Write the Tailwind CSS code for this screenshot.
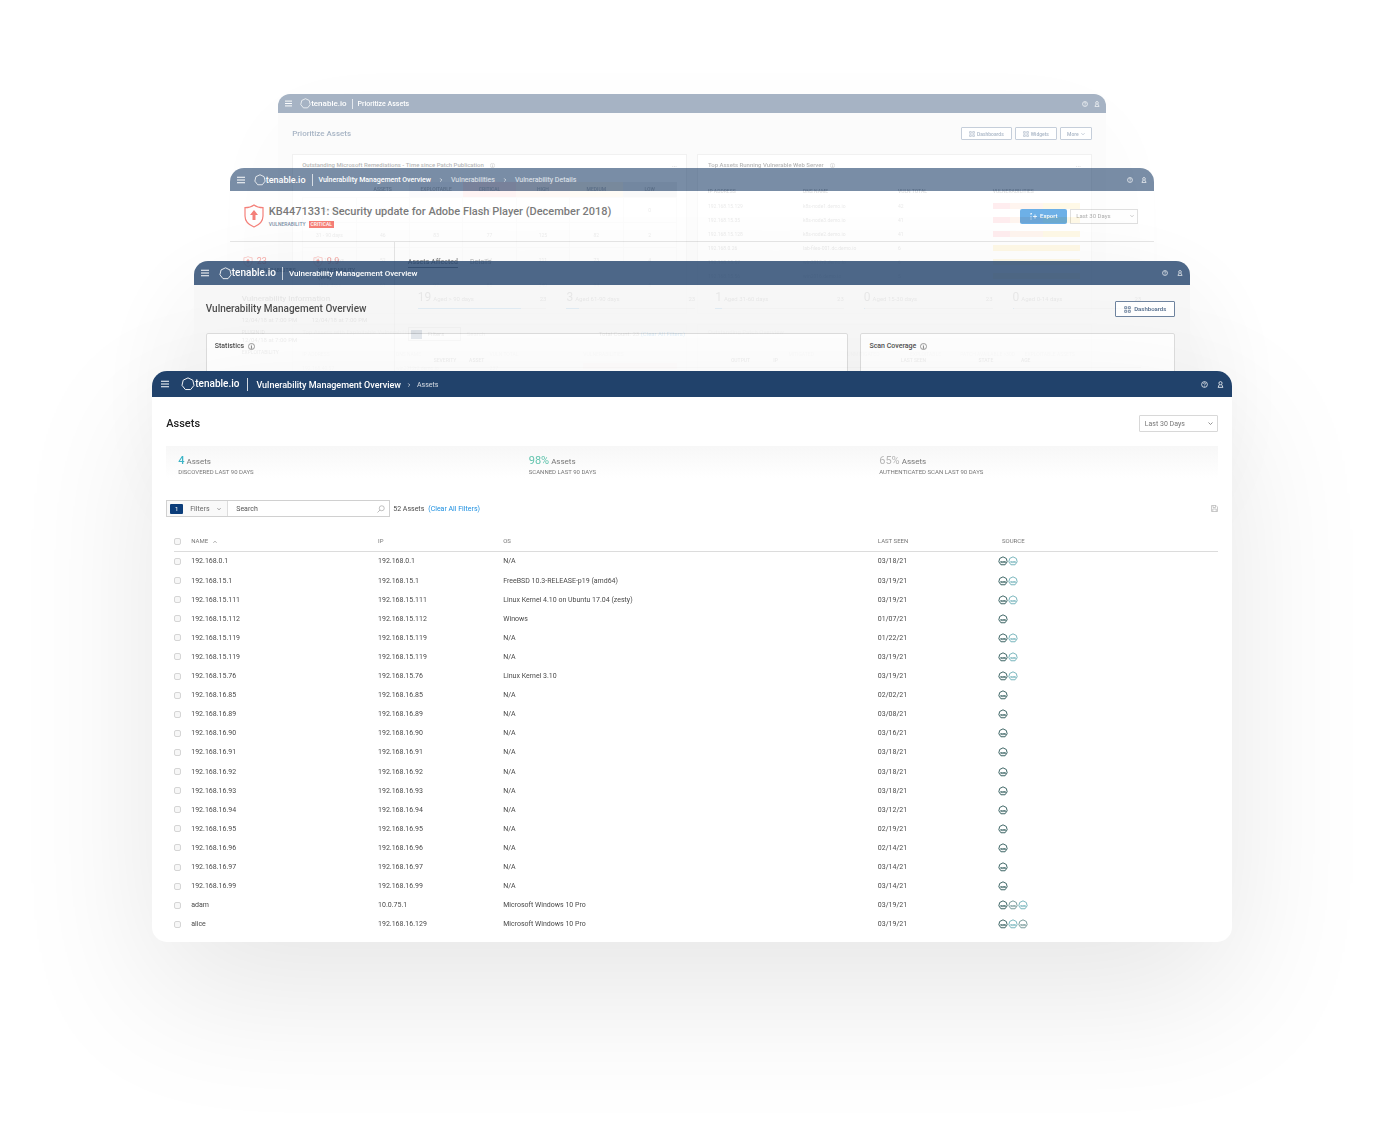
<!DOCTYPE html>
<html lang="en">
<head>
    <meta charset="UTF-8">
    <meta name="viewport" content="width=device-width, initial-scale=1.0">
    <title>Tenable.io - Assets</title>
    <script src="https://cdn.jsdelivr.net/npm/@tailwindcss/browser@4"></script>
</head>
<body class="min-h-screen bg-white font-['Roboto','Liberation_Sans',sans-serif] text-[7px] leading-[10px] text-[#4a4a4a]">

    <!-- Shared icons -->
    <svg class="hidden">
        <symbol id="menu" viewBox="0 0 16 16"><path d="M0 2.500h16M0 8h16M0 13.500h16" stroke="currentColor" stroke-width="2.200"/></symbol>
        <symbol id="ring" viewBox="0 0 24 24"><path d="M12 1.500 20.200 5.400 22.300 14.300 16.600 21.500H7.400L1.700 14.300 3.800 5.400Z" fill="none" stroke="currentColor" stroke-width="1.600" stroke-linejoin="round"/></symbol>
        <symbol id="help" viewBox="0 0 16 16"><circle cx="8" cy="8" r="6.600" fill="none" stroke="currentColor" stroke-width="1.700"/><path d="M5.800 6.400C5.800 3.400 10.200 3.400 10.200 6.200 10.200 8 8 7.800 8 9.800M8 11v1.800" fill="none" stroke="currentColor" stroke-width="1.600"/></symbol>
        <symbol id="user" viewBox="0 0 16 16"><circle cx="8" cy="5" r="3.600" fill="none" stroke="currentColor" stroke-width="1.800"/><path d="M5.200 8.500 2.500 14.500h11L10.800 8.500" fill="none" stroke="currentColor" stroke-width="1.800"/></symbol>
        <symbol id="info" viewBox="0 0 16 16"><circle cx="8" cy="8" r="7" fill="none" stroke="currentColor" stroke-width="1.200"/><path d="M8 7v5M8 4v1.600M6.500 7H8M6.300 12h3.400" stroke="currentColor" stroke-width="1.300"/></symbol>
        <symbol id="down" viewBox="0 0 10 10"><path d="m1 3 4 4 4-4" fill="none" stroke="currentColor" stroke-width="1.600"/></symbol>
        <symbol id="up" viewBox="0 0 10 10"><path d="m1 7 4-4 4 4" fill="none" stroke="currentColor" stroke-width="1.600"/></symbol>
        <symbol id="right" viewBox="0 0 10 10"><path d="m3 1 4 4-4 4" fill="none" stroke="currentColor" stroke-width="1.600"/></symbol>
        <symbol id="grid" viewBox="0 0 16 16"><path d="M1.500 1.500h4.600v4.600H1.500zM9.900 1.500h4.600v4.600H9.900zM1.500 9.900h4.600v4.600H1.500zM9.900 9.900h4.600v4.600H9.900z" fill="none" stroke="currentColor" stroke-width="1.600"/></symbol>
        <symbol id="shield" viewBox="0 0 20 24"><path d="M10 1C7.500 3 4.500 3.700 1 3.700V12C1 17.500 5 21 10 23 15 21 19 17.500 19 12V3.700C15.500 3.700 12.500 3 10 1Z" fill="none" stroke="currentColor" stroke-width="1.200"/><path d="M10 6 6 11H8.500V16H11.500V11H14Z" fill="currentColor"/></symbol>
    </svg>

    <main class="grid overflow-hidden pb-[194px]">

        <!-- Prioritize Assets -->
        <section class="mx-[20.1%] mt-[94px] self-start overflow-hidden rounded-t-[12px] bg-[#f5f5f5] opacity-40 shadow-[0_30px_100px_rgb(0_0_0/0.08)] [grid-area:1/1]">
            <header class="flex h-[19px] items-center bg-[#21426b] pr-[6px] pl-[7px] text-white">
                <button aria-label="Menu"><svg class="size-[7px]"><use href="#menu"/></svg></button>
                <a href="#" class="ml-[8px] flex items-center text-[8px] font-medium"><svg class="size-[11px]"><use href="#ring"/></svg>tenable.io</a>
                <span class="mx-[5px] h-[10px] w-px bg-white/70"></span>
                <span class="text-[7px] font-medium">Prioritize Assets</span>
                <button aria-label="Help" class="ml-auto"><svg class="size-[6px]"><use href="#help"/></svg></button>
                <button aria-label="Account" class="ml-[6px]"><svg class="size-[6px]"><use href="#user"/></svg></button>
            </header>
            <div class="px-[14px] pt-[14px]">
                <div class="flex h-[13px] items-center gap-[3px] text-[5px] text-[#21426b]">
                    <h2 class="mr-auto text-[8px] font-medium">Prioritize Assets</h2>
                    <button class="flex h-[13px] w-[51px] items-center justify-center gap-[2px] rounded-[1px] border border-[#6f86a3] bg-white font-medium"><svg class="size-[6px]"><use href="#grid"/></svg>Dashboards</button>
                    <button class="flex h-[13px] w-[42px] items-center justify-center gap-[2px] rounded-[1px] border border-[#6f86a3] bg-white font-medium"><svg class="size-[6px]"><use href="#grid"/></svg>Widgets</button>
                    <button class="flex h-[13px] w-[32px] items-center justify-center gap-[2px] rounded-[1px] border border-[#6f86a3] bg-white font-medium">More<svg class="size-[4px]"><use href="#down"/></svg></button>
                </div>
                <div class="mt-[14px] grid grid-cols-2 gap-[10px]">
                    <div class="h-[160px] border border-[#ddd] bg-white px-[9px] pt-[5px]">
                        <h3 class="flex items-center gap-[6px] text-[6px] font-medium">Outstanding Microsoft Remediations - Time since Patch Publication <svg class="size-[5px]"><use href="#info"/></svg><span class="ml-auto text-[#888]">...</span></h3>
                        <table class="mt-[12px] w-full table-fixed text-center text-[5px] text-[#888]">
                            <thead class="text-[#333]">
                                <tr class="h-[15px]"><th></th><th class="font-medium">ASSETS</th><th class="bg-[#e8e4ef] font-medium">EXPLOITABLE</th><th class="bg-[#f8b5b5] font-medium">CRITICAL</th><th class="bg-[#f8d2c0] font-medium">HIGH</th><th class="bg-[#fbe3bd] font-medium">MEDIUM</th><th class="bg-[#dcdcdc] font-medium">LOW</th></tr>
                            </thead>
                            <tbody id="patch-rows"></tbody>
                        </table>
                    </div>
                    <div class="h-[160px] border border-[#ddd] bg-white pt-[5px] pr-[3px] pl-[10px]">
                        <h3 class="flex items-center gap-[6px] pr-[7px] text-[6px] font-medium">Top Assets Running Vulnerable Web Server <svg class="size-[5px]"><use href="#info"/></svg><span class="ml-auto text-[#888]">...</span></h3>
                        <table class="mt-[12px] w-full table-fixed text-left text-[5px] text-[#777]">
                            <thead class="text-[#333]">
                                <tr class="h-[17px]"><th class="font-medium">IP ADDRESS</th><th class="font-medium">DNS NAME</th><th class="font-medium">VULN TOTAL</th><th class="font-medium">VULNERABILITIES</th></tr>
                            </thead>
                            <tbody id="server-rows"></tbody>
                        </table>
                    </div>
                    <div class="h-[90px] border border-[#ddd] bg-white px-[9px] pt-[2px]">
                        <h3 class="text-[6px] font-medium text-[#777]">Top Assets with Exploitable Vulnerabilities</h3>
                        <div class="mt-[12px] grid grid-cols-4 gap-y-[4px] text-[5px] text-[#777]">
                            <span>IP ADDRESS</span><span>DNS NAME</span><span>VULN TOTAL</span><span>VULNERABILITIES</span>
                            <span>192.168.40.57</span><span>win2012r2.demo.io</span><span>237</span><span class="h-[6px] bg-[#f8c5c0]"></span>
                        </div>
                    </div>
                    <div class="h-[90px] border border-[#ddd] bg-white px-[10px] pt-[2px]">
                        <h3 class="text-[6px] font-medium text-[#777]">Outstanding Patch Overview</h3>
                        <div class="mt-[12px] grid grid-cols-6 text-center text-[5px] whitespace-nowrap text-[#777]">
                            <span></span><span>MITIGATED</span><span>UNMITIGATED</span><span>EXPLOITABLE</span><span>PATCH AVAILABLE &gt;30D</span><span>EXPLOITABLE ASSETS</span>
                        </div>
                    </div>
                </div>
            </div>
        </section>

        <!-- Vulnerability Details -->
        <section class="mx-[16.6%] mt-[168px] self-start overflow-hidden rounded-t-[14px] bg-white opacity-60 [grid-area:1/1]">
            <header class="flex h-[23px] items-center bg-[#21426b] pr-[7px] pl-[7px] text-white">
                <button aria-label="Menu"><svg class="size-[8px]"><use href="#menu"/></svg></button>
                <a href="#" class="ml-[9px] flex items-center text-[9px] font-medium"><svg class="size-[12px]"><use href="#ring"/></svg>tenable.io</a>
                <span class="mx-[6px] h-[12px] w-px bg-white/70"></span>
                <nav class="flex items-center gap-[8px] pt-[1px] text-[7px]">
                    <a href="#" class="font-medium">Vulnerability Management Overview</a>
                    <svg class="size-[4px]"><use href="#right"/></svg>
                    <a href="#" class="text-white/80">Vulnerabilities</a>
                    <svg class="size-[4px]"><use href="#right"/></svg>
                    <a href="#" class="text-white/80">Vulnerability Details</a>
                </nav>
                <button aria-label="Help" class="ml-auto"><svg class="size-[6px]"><use href="#help"/></svg></button>
                <button aria-label="Account" class="ml-[8px]"><svg class="size-[6px]"><use href="#user"/></svg></button>
            </header>
            <div class="flex h-[51px] items-center border-b border-[#d5d5d5] pr-[16px] pl-[14px]">
                <svg class="h-[24px] w-[20px] text-[#ef2d22]"><use href="#shield"/></svg>
                <div class="ml-[5px]">
                    <h2 class="text-[11px] leading-[14px] font-medium text-[#222]">KB4471331: Security update for Adobe Flash Player (December 2018)</h2>
                    <p class="mt-[2px] flex items-center gap-[3px] text-[5px] leading-[7px] font-medium text-[#21426b]">VULNERABILITY <span class="bg-[#f02b1d] px-[2px] text-white">CRITICAL</span></p>
                </div>
                <button class="ml-auto flex h-[15px] w-[47px] items-center justify-center gap-[3px] rounded-[2px] bg-[#0d7cd8] text-[6px] font-medium text-white"><svg class="size-[7px]" viewBox="0 0 14 14"><path d="M2 1v3M2 6v3M2 11v2M1 1h3M6 7h8M10 3v8" fill="none" stroke="currentColor" stroke-width="1.600"/></svg>Export</button>
                <label class="relative ml-[3px] text-[#777]">
                    <select aria-label="Time range" class="block h-[15px] w-[68px] appearance-none border border-[#ccc] px-[5px] text-[6px]"><option>Last 30 Days</option></select>
                    <svg class="absolute top-[5px] right-[4px] size-[4px]"><use href="#down"/></svg>
                </label>
            </div>
            <div class="flex h-[240px]">
                <aside class="w-[165px] border-r border-[#d5d5d5] px-[12px] pt-[13px] text-[6px] leading-[7px] text-[#777]">
                    <div class="grid grid-cols-2 text-[9px] leading-[12px] text-[#f4756e]">
                        <span class="flex items-center gap-[3px]"><svg class="h-[11px] w-[12px]"><use href="#shield"/></svg>23</span>
                        <span class="flex items-center gap-[3px]"><svg class="h-[11px] w-[12px]"><use href="#shield"/></svg>9.9</span>
                    </div>
                    <div class="grid grid-cols-2 pl-[13px] text-[5px] font-medium text-[#333]"><span>VULNERABILITIES</span><span>VULNERABILITY<br>(VPR)</span></div>
                    <h3 class="mt-[13px] text-[8px] leading-[10px] font-medium">Vulnerability Information</h3>
                    <div class="mt-[12px] grid grid-cols-2"><span>12/04/18 at 7:00 PM</span><span>12/04/18 at 7:00 PM</span></div>
                    <p class="mt-[6px] text-[5px]">PLUGIN ID</p>
                    <p>12/04/18 at 7:00 PM</p>
                    <p class="mt-[6px] text-[5px]">EXPLOITABILITY</p>
                </aside>
                <div class="flex-1 px-[13px] pt-[15px] text-[6px] text-[#777]">
                    <nav class="flex gap-[12px] text-[7px]"><a href="#" class="border-b border-[#333] font-medium text-[#333]">Assets Affected</a><a href="#">Details</a></nav>
                    <div id="age-counters" class="mt-[23px] flex gap-[20px] pl-[10px]"></div>
                    <div class="mt-[18px] flex items-center">
                        <button class="flex h-[14px] w-[53px] items-center gap-[6px] border border-[#ccc] pl-[2px]"><span class="h-[9px] w-[11px] bg-[#21426b]"></span>Filters</button>
                        <input aria-label="Search assets" placeholder="Search" class="ml-[6px] w-[132px]">
                        <span>Total Count: 23 <a href="#" class="text-[#0d80d8]">(Clear All Filters)</a></span>
                    </div>
                    <div class="mt-[14px] flex border-b border-[#ddd] pb-[2px] pl-[26px] text-[5px] font-medium">
                        <span class="w-[5%]">SEVERITY</span><span class="w-[37%]">ASSET</span><span class="w-[6%]">OUTPUT</span><span class="w-[18%]">IP</span><span class="w-[11%]">LAST SEEN</span><span class="w-[6%]">STATE</span><span>AGE</span>
                    </div>
                </div>
            </div>
        </section>

        <!-- Vulnerability Management Overview -->
        <section class="mx-[14%] mt-[261px] self-start overflow-hidden rounded-t-[14px] bg-[#f5f5f5] opacity-80 shadow-[0_40px_120px_rgb(0_0_0/0.1)] [grid-area:1/1]">
            <header class="flex h-[24px] items-center bg-[#21426b] pr-[7px] pl-[7px] text-white">
                <button aria-label="Menu"><svg class="size-[8px]"><use href="#menu"/></svg></button>
                <a href="#" class="ml-[10px] flex items-center text-[10px] font-medium"><svg class="size-[13px]"><use href="#ring"/></svg>tenable.io</a>
                <span class="mx-[6px] h-[13px] w-px bg-white/70"></span>
                <span class="pt-[1px] text-[8px] font-medium">Vulnerability Management Overview</span>
                <button aria-label="Help" class="ml-auto"><svg class="size-[6px]"><use href="#help"/></svg></button>
                <button aria-label="Account" class="ml-[9px]"><svg class="size-[6px]"><use href="#user"/></svg></button>
            </header>
            <div class="pt-[16px] pr-[15px] pl-[12px]">
                <div class="flex h-[16px] items-center justify-between">
                    <h2 class="text-[10px] font-medium text-[#222]">Vulnerability Management Overview</h2>
                    <button class="flex h-[16px] w-[60px] items-center justify-center gap-[3px] rounded-[1px] border border-[#4b6688] bg-white text-[6px] font-medium text-[#21426b]"><svg class="size-[7px]"><use href="#grid"/></svg>Dashboards</button>
                </div>
                <div class="mt-[16px] grid grid-cols-[643fr_315fr] gap-[12px]">
                    <div class="h-[120px] rounded-[2px] border border-[#d5d5d5] bg-white px-[8px] pt-[7px]">
                        <h3 class="flex items-center gap-[4px] text-[7px] font-medium text-[#222]">Statistics <svg class="size-[7px]"><use href="#info"/></svg></h3>
                    </div>
                    <div class="h-[120px] rounded-[2px] border border-[#d5d5d5] bg-white px-[8px] pt-[7px]">
                        <h3 class="flex items-center gap-[4px] text-[7px] font-medium text-[#222]">Scan Coverage <svg class="size-[7px]"><use href="#info"/></svg></h3>
                    </div>
                </div>
            </div>
        </section>

        <!-- Assets -->
        <section class="z-10 mx-[11%] mt-[371px] self-start overflow-hidden rounded-[15px] bg-white pb-[8px] shadow-[0_50px_140px_rgb(0_0_0/0.1)] [grid-area:1/1]">
            <header class="flex h-[26px] items-center bg-[#21426b] pr-[8px] pl-[9px] text-white">
                <button aria-label="Menu"><svg class="size-[8px]"><use href="#menu"/></svg></button>
                <a href="#" class="ml-[12px] flex items-center text-[10px] font-medium"><svg class="size-[14px]"><use href="#ring"/></svg>tenable.io</a>
                <span class="mx-[8px] h-[13px] w-px bg-white/80"></span>
                <nav class="flex items-center gap-[6px] pt-[1px]">
                    <a href="#" class="text-[9px] font-medium">Vulnerability Management Overview</a>
                    <svg class="size-[4px]"><use href="#right"/></svg>
                    <a href="#" class="text-[7px] text-white/80">Assets</a>
                </nav>
                <button aria-label="Help" class="ml-auto"><svg class="size-[7px]"><use href="#help"/></svg></button>
                <button aria-label="Account" class="ml-[9px]"><svg class="size-[7px]"><use href="#user"/></svg></button>
            </header>
            <div class="px-[14px] pt-[18px]">
                <div class="flex h-[17px] items-center justify-between">
                    <h1 class="text-[11px] font-medium text-[#222]">Assets</h1>
                    <label class="relative text-[#777]">
                        <select aria-label="Time range" class="block h-[17px] w-[79px] appearance-none rounded-[1px] border border-[#d8d8d8] bg-white px-[5px] text-[7px]"><option>Last 30 Days</option></select>
                        <svg class="absolute top-[6px] right-[5px] size-[5px]"><use href="#down"/></svg>
                    </label>
                </div>

                <div class="mt-[14px] grid h-[32px] grid-cols-3 bg-linear-to-b from-[#f7f7f7] to-white pt-[8px] text-[#777]">
                    <div class="pl-[12px]">
                        <p class="text-[8px] leading-[13px]"><span class="text-[11px] font-medium text-[#3cb4c6]">4</span> Assets</p>
                        <p class="text-[6px] leading-[8px]">DISCOVERED LAST 90 DAYS</p>
                    </div>
                    <div class="pl-[12px]">
                        <p class="text-[8px] leading-[13px]"><span class="text-[11px] text-[#63c4ae]">98%</span> Assets</p>
                        <p class="text-[6px] leading-[8px]">SCANNED LAST 90 DAYS</p>
                    </div>
                    <div class="pl-[12px]">
                        <p class="text-[8px] leading-[13px]"><span class="text-[11px] text-[#b5b5b5]">65%</span> Assets</p>
                        <p class="text-[6px] leading-[8px]">AUTHENTICATED SCAN LAST 90 DAYS</p>
                    </div>
                </div>

                <div class="mt-[22px] flex h-[17px] items-center">
                    <div class="flex h-[17px] w-[224px] border border-[#d0d0d0]">
                        <button class="flex w-[61px] items-center border-r border-[#ddd] bg-[#f9f9f9] pl-[3px] text-[#666]">
                            <span class="flex h-[10px] w-[13px] items-center justify-center rounded-[1px] bg-[#0b3d7a] text-[6px] text-white">1</span>
                            <span class="ml-[7px]">Filters</span>
                            <svg class="mr-[6px] ml-auto size-[4px]"><use href="#down"/></svg>
                        </button>
                        <input type="search" aria-label="Search assets" placeholder="Search" class="min-w-0 flex-1 pl-[8px] text-[7px] placeholder:text-[#555]">
                        <button aria-label="Search" class="px-[4px] text-[#999]"><svg class="size-[8px]" viewBox="0 0 16 16"><circle cx="9.500" cy="6.500" r="5" fill="none" stroke="currentColor" stroke-width="1.200"/><path d="M6 10 1 15" stroke="currentColor" stroke-width="1.300"/></svg></button>
                    </div>
                    <span class="ml-[3px]">52 Assets</span>
                    <a href="#" class="ml-[4px] text-[#1c8fe0]">(Clear All Filters)</a>
                    <button aria-label="Save" class="ml-auto text-[#b5b5b5]"><svg class="size-[7px]" viewBox="0 0 14 14"><path d="M1 1h9l3 3v9H1ZM4 1v4h5V1M3.500 13V8h7v5" fill="none" stroke="currentColor" stroke-width="1.400"/></svg></button>
                </div>

                <div class="mt-[15px] pl-[8px]">
                    <table class="h-[402px] w-full table-fixed text-left">
                        <thead class="text-[6px] text-[#777]">
                            <tr class="h-[19px] border-b border-[#dcdcdc]">
                                <th class="w-[17px]"><input type="checkbox" aria-label="Select all" class="block size-[7px] appearance-none rounded-[2px] border border-[#d5d5d5] bg-[#f7f7f7]"></th>
                                <th class="w-[17.9%] font-normal">NAME <svg class="ml-[3px] inline size-[4px]"><use href="#up"/></svg></th>
                                <th class="w-[12%] font-normal">IP</th>
                                <th class="w-[35.9%] font-normal">OS</th>
                                <th class="w-[11.9%] font-normal">LAST SEEN</th>
                                <th class="font-normal">SOURCE</th>
                            </tr>
                        </thead>
                        <tbody id="asset-rows"></tbody>
                    </table>
                </div>
            </div>
        </section>
    </main>

    <script>
        // name, ip, os, last seen, sources (d = dark, g = grey, t = teal)
        const assets = [
            ["192.168.0.1", "192.168.0.1", "N/A", "03/18/21", "dt"],
            ["192.168.15.1", "192.168.15.1", "FreeBSD 10.3-RELEASE-p19 (amd64)", "03/19/21", "dt"],
            ["192.168.15.111", "192.168.15.111", "Linux Kernel 4.10 on Ubuntu 17.04 (zesty)", "03/19/21", "dt"],
            ["192.168.15.112", "192.168.15.112", "Winows", "01/07/21", "d"],
            ["192.168.15.119", "192.168.15.119", "N/A", "01/22/21", "dt"],
            ["192.168.15.119", "192.168.15.119", "N/A", "03/19/21", "dt"],
            ["192.168.15.76", "192.168.15.76", "Linux Kernel 3.10", "03/19/21", "dt"],
            ["192.168.16.85", "192.168.16.85", "N/A", "02/02/21", "d"],
            ["192.168.16.89", "192.168.16.89", "N/A", "03/08/21", "d"],
            ["192.168.16.90", "192.168.16.90", "N/A", "03/16/21", "d"],
            ["192.168.16.91", "192.168.16.91", "N/A", "03/18/21", "d"],
            ["192.168.16.92", "192.168.16.92", "N/A", "03/18/21", "d"],
            ["192.168.16.93", "192.168.16.93", "N/A", "03/18/21", "d"],
            ["192.168.16.94", "192.168.16.94", "N/A", "03/12/21", "d"],
            ["192.168.16.95", "192.168.16.95", "N/A", "02/19/21", "d"],
            ["192.168.16.96", "192.168.16.96", "N/A", "02/14/21", "d"],
            ["192.168.16.97", "192.168.16.97", "N/A", "03/14/21", "d"],
            ["192.168.16.99", "192.168.16.99", "N/A", "03/14/21", "d"],
            ["adam", "10.0.75.1", "Microsoft Windows 10 Pro", "03/19/21", "dgt"],
            ["alice", "192.168.16.129", "Microsoft Windows 10 Pro", "03/19/21", "dtg"]
        ];

        const sourceColors = { d: "text-[#2f5a5a]", g: "text-[#6f9494]", t: "text-[#6fb0b8]" };

        // heptagon badge with a small label bar in its lower half
        function sourceIcon(kind) {
            return `<svg viewBox="0 0 24 24" class="size-[10px] ${sourceColors[kind]}">
                <path d="M12 2 20 6 22 14 17 21H7L2 14 4 6Z" fill="none" stroke="currentColor" stroke-width="2.200" stroke-linejoin="round"/>
                <path d="M7 17v-5l3 5v-5M12.500 12v5M14.500 17v-5l3 5v-5" fill="none" stroke="currentColor" stroke-width="1.500"/>
            </svg>`;
        }

        document.getElementById("asset-rows").innerHTML = assets.map(([name, ip, os, seen, sources], i) => `
            <tr>
                <td><input type="checkbox" id="asset-${i}" class="block size-[7px] appearance-none rounded-[2px] border border-[#d5d5d5] bg-[#f7f7f7]"></td>
                <td><label for="asset-${i}">${name}</label></td>
                <td>${ip}</td>
                <td>${os}</td>
                <td>${seen}</td>
                <td><span class="-ml-[4px] flex">${[...sources].map(sourceIcon).join("")}</span></td>
            </tr>`).join("");

        const patches = [
            ["0 - 30 days", 12, 9, 8, 17, 6, 0],
            ["31 - 90 days", 46, 83, 77, 125, 82, 2],
            ["91 - 180 days", 52, 91, 64, 211, 73, 4],
            ["181+ days", 61, 97, 85, 340, 94, 5]
        ];
        document.getElementById("patch-rows").innerHTML = patches.map(row => `
            <tr class="h-[25px]">${row.map(v => `<td class="border border-[#eee]">${v}</td>`).join("")}</tr>`).join("");

        // last three values: critical, high and medium share of the bar
        const servers = [
            ["192.168.15.129", "k8s-node1.demo.io", 42, 20, 38, 42],
            ["192.168.15.35", "k8s-node3.demo.io", 41, 20, 38, 42],
            ["192.168.15.128", "k8s-node2.demo.io", 41, 20, 38, 42],
            ["192.168.0.26", "lab-files-001.dc.demo.io", 6, 0, 0, 100],
            ["192.168.15.57", "win2012r2.demo.io", 6, 0, 0, 100],
            ["192.168.15.56", "win2016.demo.io", 5, 0, 0, 100]
        ];
        document.getElementById("server-rows").innerHTML = servers.map(([ip, dns, total, c, h, m]) => `
            <tr class="h-[14px]">
                <td>${ip}</td><td>${dns}</td><td>${total}</td>
                <td><span class="mr-[8px] flex h-[6px]">
                    <span class="bg-[#ff8f9c]" style="width:${c}%"></span>
                    <span class="bg-[#ffc299]" style="width:${h}%"></span>
                    <span class="bg-[#ffd966]" style="width:${m}%"></span>
                </span></td>
            </tr>`).join("");

        const ages = [[19, "Aged > 90 days", 80], [3, "Aged 61-90 days", 10], [1, "Aged 31-60 days", 5], [0, "Aged 15-30 days", 1], [0, "Aged 0-14 days", 1]];
        document.getElementById("age-counters").innerHTML = ages.map(([count, label, share]) => `
            <div class="flex-1">
                <p class="flex items-baseline leading-[13px]"><span class="mr-[2px] text-[12px]">${count}</span>${label}<span class="ml-auto">23</span></p>
                <div class="mt-[3px] h-px bg-[#ddd]"><div class="h-px bg-[#3c9be0]" style="width:${share}%"></div></div>
            </div>`).join("");
    </script>
</body>
</html>
